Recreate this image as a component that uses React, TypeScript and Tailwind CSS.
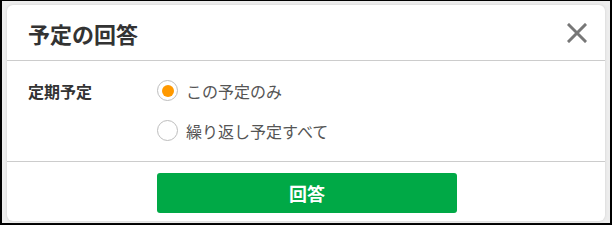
import {useState} from 'react';

const FONT = '[font-family:"Noto_Sans_CJK_JP","Noto_Sans",sans-serif]';

type Choice = 'once' | 'all';

function Radio({checked}: {checked: boolean}) {
  return (
    <span className="inline-flex h-[21px] w-[21px] shrink-0 items-center justify-center rounded-full border border-[#bdbdbd] bg-white">
      {checked && <span className="h-[12px] w-[12px] rounded-full bg-[#ff9900]" />}
    </span>
  );
}

export default function App() {
  const [choice, setChoice] = useState<Choice>('once');

  const options: {value: Choice; label: string}[] = [
    {value: 'once', label: 'この予定のみ'},
    {value: 'all', label: '繰り返し予定すべて'},
  ];

  return (
    <div className={`flex h-[225px] w-[612px] bg-black pt-[1px] pr-[2px] pb-[2px] pl-[2px] ${FONT}`}>
      <div className="flex flex-1 bg-[#ededed] pt-[4px] pr-[5px] pb-[2px] pl-[5px]">
        <div className="flex flex-1 flex-col rounded-[6px] bg-white shadow-[0_0_3px_#d0d0d0]">
          <header className="flex h-[56px] shrink-0 items-center justify-between border-b border-[#cccccc] pr-[17px] pl-[21px]">
            <h1 className="text-[22px] leading-none font-bold text-[#333333]">予定の回答</h1>
            <button type="button" className="flex h-[22px] w-[22px] items-center justify-center text-[#777777]">
              <svg width="20" height="20" viewBox="0 0 20 20" fill="none" stroke="currentColor" strokeWidth="3" strokeLinecap="square">
                <path d="M2 2 L18 18 M18 2 L2 18" />
              </svg>
            </button>
          </header>

          <div className="flex shrink-0 border-b border-[#cccccc] pt-[19px] pb-[20px] pl-[21px]">
            <div className="flex h-[21px] w-[129px] items-center text-[16px] leading-none font-bold text-[#333333]">
              定期予定
            </div>
            <div className="flex flex-col gap-[19px]">
              {options.map(option => (
                <label
                  key={option.value}
                  onClick={() => setChoice(option.value)}
                  className="flex h-[21px] cursor-pointer items-center gap-[8px] text-[16px] leading-none text-[#555555]"
                >
                  <Radio checked={choice === option.value} />
                  {option.label}
                </label>
              ))}
            </div>
          </div>

          <footer className="flex flex-1 pt-[11px] pl-[150px]">
            <button
              type="button"
              className="flex h-[40px] w-[300px] items-center justify-center rounded-[3px] bg-[#00a946] text-[18px] font-bold text-white"
            >
              回答
            </button>
          </footer>
        </div>
      </div>
    </div>
  );
}
